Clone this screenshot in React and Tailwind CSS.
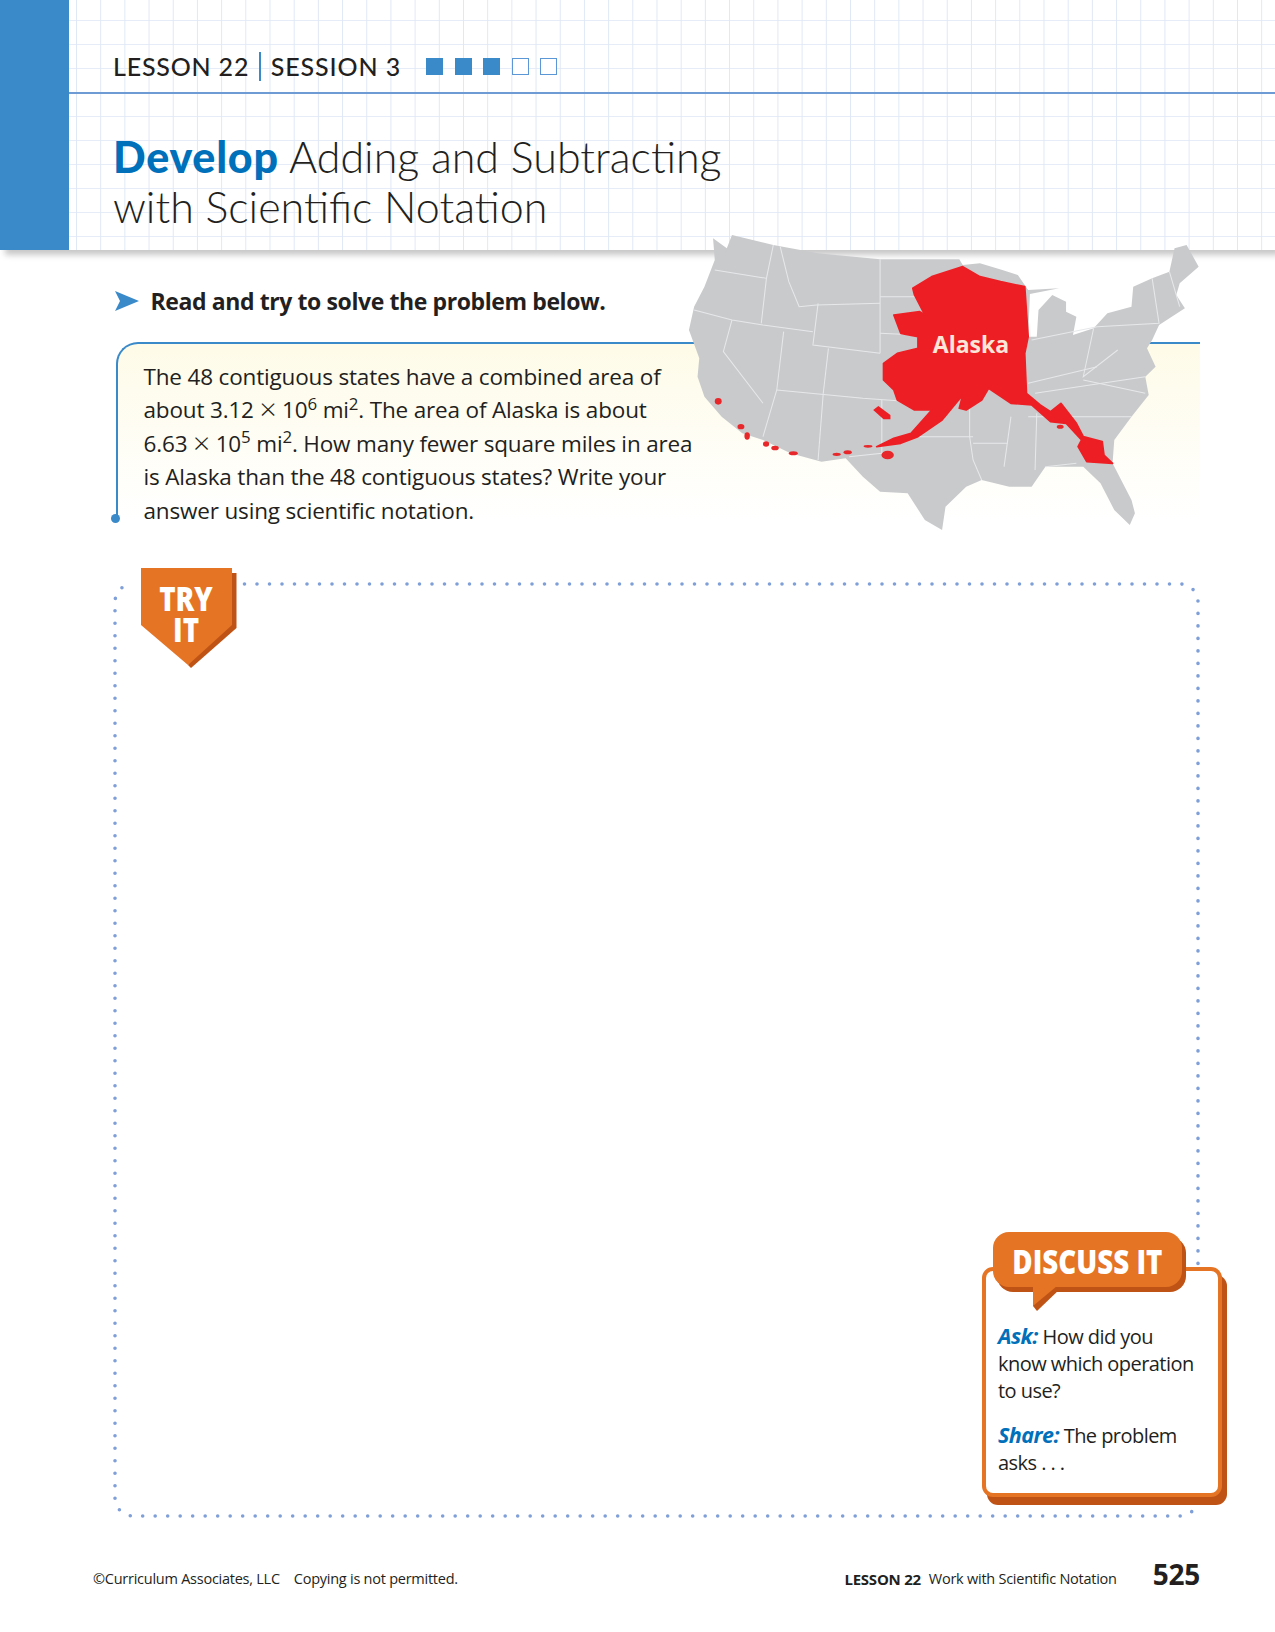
import React from 'react';

const body = { fontFamily: '"Open Sans", "Noto Sans", sans-serif' };
const heading = { fontFamily: 'Lato, "Open Sans", sans-serif' };

const stateLines = [
  '70,270 180,300 270,315 415,335',
  '130,150 280,175 265,310',
  '300,75 280,175',
  '320,80 345,185 375,260 425,255 610,250',
  '430,250 415,375 610,400',
  '610,118 610,400',
  '610,230 740,230',
  '610,340 720,345',
  '460,385 445,520',
  '180,300 155,395 270,550',
  '330,335 310,510 270,650',
  '310,510 560,535 700,545',
  '445,520 430,720',
  '615,540 615,700 520,710',
  '870,560 870,650 880,720 905,780',
  '700,650 880,650',
  '880,670 980,670',
  '990,590 970,740',
  '1065,580 1060,750',
  '1090,740 1180,730',
  '1040,490 1240,440',
  '1050,360 1240,320',
  '1230,325 1200,470 1300,390',
  '1200,480 1380,520',
  '1060,520 1380,470',
  '1400,175 1420,310 1240,320',
  '1450,155 1480,260',
  '1040,590 1340,590',
];

const usOutline =
  '125,55 165,85 180,45 300,75 430,100 610,118 840,118 850,135 900,130 965,150 1010,165 1040,210 1130,205 1045,222 1040,350 1065,350 1070,270 1110,225 1150,245 1150,275 1180,290 1170,345 1230,325 1270,280 1340,260 1345,200 1400,175 1450,155 1465,85 1500,75 1535,140 1480,190 1470,225 1495,265 1420,315 1400,360 1385,385 1410,440 1380,470 1390,525 1340,590 1290,660 1285,730 1340,840 1350,880 1335,915 1290,870 1250,790 1200,740 1090,740 1050,800 985,800 905,780 860,800 800,860 790,930 740,900 690,820 610,815 560,770 510,715 440,725 350,700 270,660 210,640 150,590 100,530 80,470 85,415 55,330 70,260 100,200 130,120';

const alaska =
  '705,205 760,170 850,140 900,170 960,185 1030,200 1040,350 1030,400 1035,520 1075,555 1105,575 1135,550 1180,610 1200,650 1255,665 1260,705 1285,730 1210,725 1185,680 1195,660 1150,610 1105,605 1050,555 990,550 925,505 905,540 860,570 840,565 850,525 790,600 720,650 670,670 600,680 650,655 700,640 760,570 710,570 660,540 650,510 620,480 620,430 660,400 720,385 720,350 670,340 650,285 725,275 740,285 710,225';

const islands = [
  [140, 544, 10, 10],
  [206, 620, 10, 8],
  [224, 648, 8, 11],
  [279, 672, 9, 8],
  [305, 684, 11, 7],
  [358, 700, 13, 6],
  [484, 703, 12, 5],
  [516, 697, 12, 6],
  [575, 679, 13, 4],
  [632, 705, 18, 13],
  [1133, 620, 10, 6],
];

function UsMap() {
  return (
    <svg width="540" height="320" viewBox="0 0 540 320" className="absolute left-[670px] top-[220px]">
      <g transform="scale(0.3444 0.3333)">
        <polygon points={usOutline} fill="#c9cacc" />
        {stateLines.map((pts) => (
          <polyline key={pts} points={pts} fill="none" stroke="#e6e8ea" strokeWidth="3" />
        ))}
        <polygon points={alaska} fill="#ed1f24" stroke="#ed1f24" strokeWidth="5" strokeLinejoin="round" />
        <polygon points="590,570 605,558 640,585 640,598 620,598" fill="#ed1f24" />
        {islands.map(([cx, cy, rx, ry]) => (
          <ellipse key={cx} cx={cx} cy={cy} rx={rx} ry={ry} fill="#e8272a" />
        ))}
      </g>
      <text x="301" y="133" textAnchor="middle" fill="#fbe6d8" fontSize="23" fontWeight="700" fontFamily="Open Sans, sans-serif">
        Alaska
      </text>
    </svg>
  );
}

function ProgressSquares() {
  return (
    <div className="flex gap-[11.5px] ml-[25px]">
      <span className="w-[17px] h-[17px] bg-[#3a8aca]" />
      <span className="w-[17px] h-[17px] bg-[#3a8aca]" />
      <span className="w-[17px] h-[17px] bg-[#3a8aca]" />
      <span className="w-[17px] h-[17px] border-[1.5px] border-[#5b96d6] bg-white" />
      <span className="w-[17px] h-[17px] border-[1.5px] border-[#5b96d6] bg-white" />
    </div>
  );
}

function Header() {
  return (
    <header className="flex h-[250px] shadow-[5px_5px_6px_rgba(0,0,0,0.22)]">
      <div className="w-[69px] bg-[#3a8aca]" />
      <div className="flex-1 bg-[linear-gradient(to_right,#dfe8f6_1px,transparent_1px),linear-gradient(to_bottom,#e6edf8_1.5px,transparent_1.5px)] bg-[size:24.2px_24px] bg-[position:7px_20px]">
        <div className="h-[94px] border-b-2 border-[#6f9bd4] pl-[44px] flex items-center pt-[40px]" style={heading}>
          <span className="text-[25px] font-medium tracking-[0.8px] text-[#231f20] leading-none">LESSON 22</span>
          <span className="w-[1.5px] h-[29px] bg-[#3a8aca] mx-[10px]" />
          <span className="text-[25px] font-medium tracking-[0.9px] text-[#231f20] leading-none">SESSION 3</span>
          <ProgressSquares />
        </div>
        <h1 className="pl-[44px] pt-[38px] text-[43px] leading-[50px] font-light text-[#231f20]" style={heading}>
          <span className="font-black tracking-[0.75px] text-[#0070ba]">Develop</span> Adding and Subtracting
          <br />
          with Scientific Notation
        </h1>
      </div>
    </header>
  );
}

function Times() {
  return <span className="font-light text-[30px] leading-none align-[-2px]">×</span>;
}

function Problem() {
  return (
    <div className="relative ml-[1px] mt-[26px] h-[177px] border-t-[2.5px] border-l-[2.5px] border-[#3a8aca] rounded-tl-[22px] bg-linear-to-b from-[#fefbe8] to-white pl-[26px] pt-[16px] text-[22.5px] leading-[33.4px] tracking-[-0.17px] text-[#231f20]">
      <p>The 48 contiguous states have a combined area of</p>
      <p>about 3.12 <Times /> 10<sup>6</sup> mi<sup>2</sup>. The area of Alaska is about</p>
      <p>6.63 <Times /> 10<sup>5</sup> mi<sup>2</sup>. How many fewer square miles in area</p>
      <p>is Alaska than the 48 contiguous states? Write your</p>
      <p>answer using scientific notation.</p>
      <span className="absolute -left-[6.5px] bottom-[-4px] w-[9px] h-[9px] rounded-full bg-[#3a8aca]" />
    </div>
  );
}

function TryItBadge() {
  return (
    <div className="absolute left-[26px] -top-[16px] w-[96px] h-[101px]">
      <svg width="96" height="101" className="absolute inset-0">
        <polygon points="91,5 95.5,5 95.5,60 50,100 47,97" fill="#bf5316" />
        <polygon points="0,0 91,0 91,57 47,97 0,57" fill="#e57425" />
      </svg>
      <div className="relative w-[90px] pt-[15px] text-center text-white text-[33px] leading-[31px] font-extrabold scale-x-[0.84]" style={body}>
        TRY
        <br />
        IT
      </div>
    </div>
  );
}

function DiscussIt() {
  return (
    <div className="absolute left-[867.5px] top-[648px] w-[240px]">
      <div className="relative z-10 ml-[11px] w-[189px] h-[55px] rounded-[16px] bg-[#e57425] shadow-[4px_5px_0_#bf5316] flex items-center justify-center pt-[3px]">
        <span className="text-white text-[33px] font-extrabold leading-none scale-x-[0.84] whitespace-nowrap" style={body}>
          DISCUSS IT
        </span>
        <svg width="34" height="30" className="absolute left-[40px] top-[54px]">
          <polygon points="0,2 28,2 4,25 0,20" fill="#bf5316" />
          <polygon points="0,0 24,0 0,20" fill="#e57425" />
        </svg>
      </div>
      <div className="-mt-[20px] h-[230px] rounded-[11px] border-[4px] border-[#e57425] bg-white shadow-[5px_8px_0_#bf5316] pl-[12px] pt-[52px] text-[20px] leading-[27px] tracking-[-0.55px] text-[#231f20]" style={body}>
        <p>
          <b className="italic font-bold text-[21.5px] leading-none text-[#0070ba]">Ask:</b> How did you
          <br />
          know which operation
          <br />
          to use?
        </p>
        <p className="mt-[18px]">
          <b className="italic font-bold text-[21.5px] leading-none text-[#0070ba]">Share:</b> The problem
          <br />
          asks . . .
        </p>
      </div>
    </div>
  );
}

function TryItPanel() {
  return (
    <div className="relative mt-[65px] w-[1083px] h-[932px]">
      <svg width="1083" height="932" className="absolute inset-0 overflow-visible">
        <path
          d="M129.5 0 H1065 A18 18 0 0 1 1083 18 V914 A18 18 0 0 1 1065 932 H18 A18 18 0 0 1 0 914 V18 A18 18 0 0 1 18 0"
          fill="none"
          stroke="#7f9fd8"
          strokeWidth="3.6"
          strokeLinecap="round"
          strokeDasharray="0 12.5"
        />
      </svg>
      <TryItBadge />
      <DiscussIt />
    </div>
  );
}

function Footer() {
  return (
    <footer className="mt-[48px] h-[30px] pl-[93px] pr-[75px] flex items-center justify-between text-[14.5px] tracking-[-0.25px] text-[#231f20]" style={body}>
      <div className="flex gap-[14px]">
        <span>©Curriculum Associates, LLC</span>
        <span>Copying is not permitted.</span>
      </div>
      <div className="flex items-center">
        <b className="font-bold text-[15px]">LESSON 22</b>
        <span className="ml-[8px]">Work with Scientific Notation</span>
        <b className="ml-[36px] mb-[10px] text-[28px] font-bold leading-none">525</b>
      </div>
    </footer>
  );
}

export default function App() {
  return (
    <div className="relative w-[1275px] h-[1632px] bg-white overflow-hidden" style={body}>
      <Header />
      <main className="pl-[114.5px] pr-[75px]">
        <div className="mt-[36px] h-[30px] flex items-center gap-[12px]">
          <svg width="24" height="20" viewBox="0 0 24 20">
            <polygon points="0,0 24,10 0,20 5,10" fill="#3a8aca" />
          </svg>
          <span className="text-[23px] font-bold tracking-[-0.4px] text-[#231f20]">Read and try to solve the problem below.</span>
        </div>
        <Problem />
        <TryItPanel />
      </main>
      <Footer />
      <UsMap />
    </div>
  );
}
